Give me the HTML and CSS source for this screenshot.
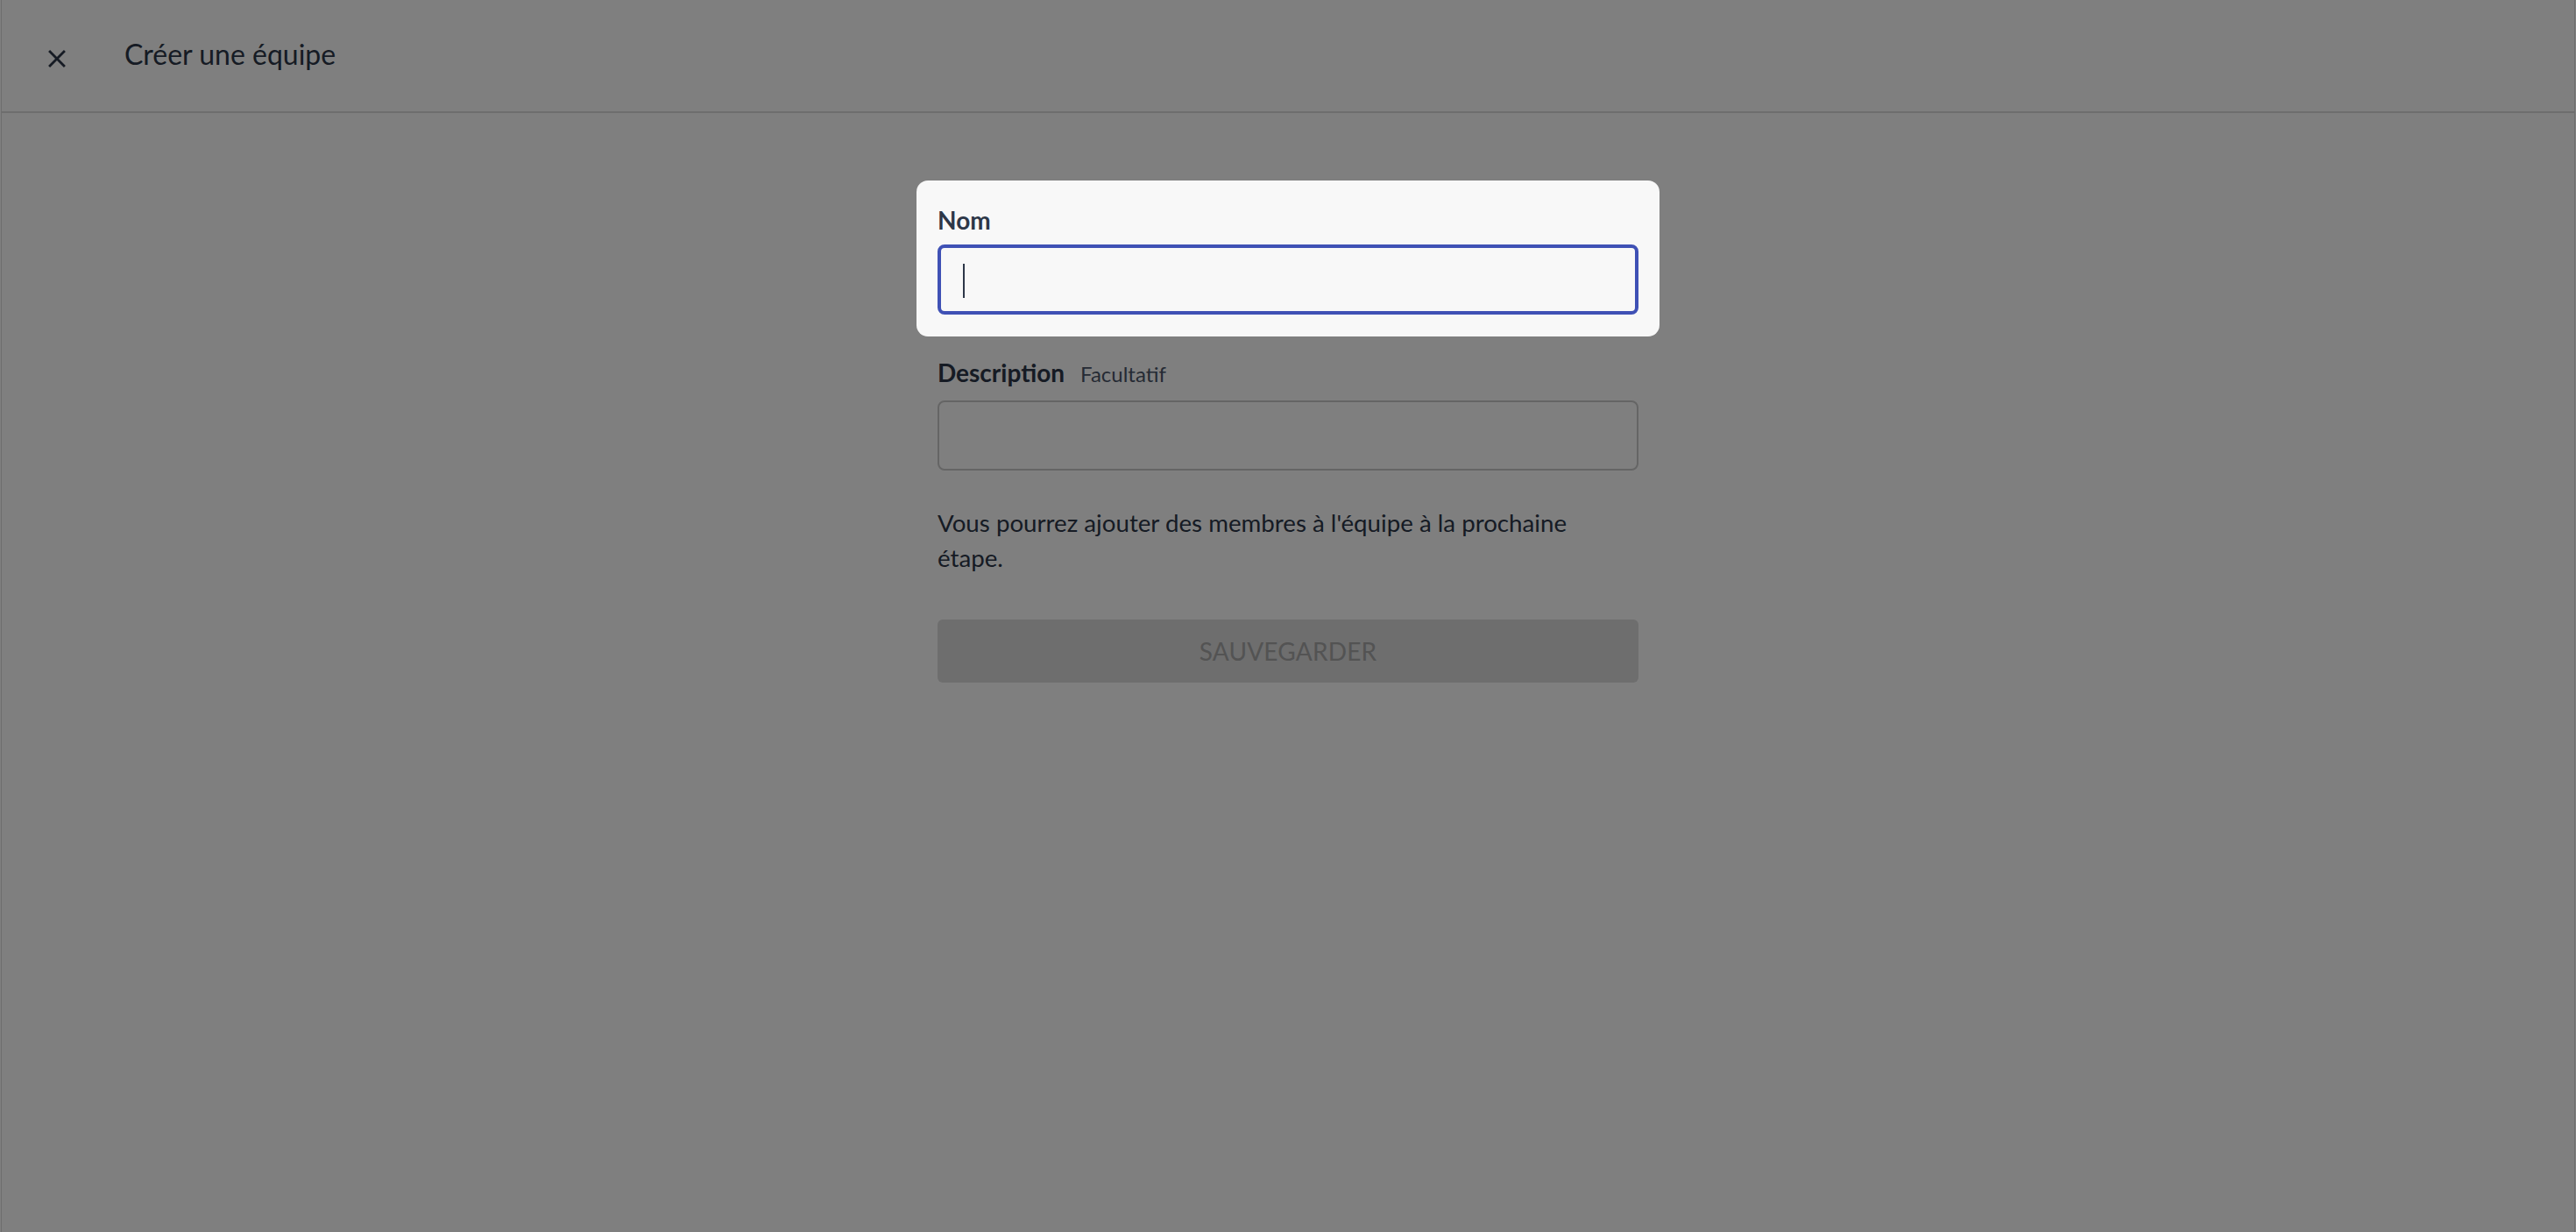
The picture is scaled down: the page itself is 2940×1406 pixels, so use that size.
FILE: index.html
```html
<!DOCTYPE html>
<html lang="fr">
<head>
  <meta charset="UTF-8" />
  <meta name="viewport" content="width=device-width, initial-scale=1.0"/>
  <title>Créer une équipe</title>
  <link rel="stylesheet" href="styles.css">
</head>
<body>
  <div class="page">
    <header class="topbar">
      <button class="close-btn" type="button" aria-label="Fermer">
        <svg viewBox="0 0 24 24" width="34" height="34">
          <path d="M19 6.41L17.59 5 12 10.59 6.41 5 5 6.41 10.59 12 5 17.59 6.41 19 12 13.41 17.59 19 19 17.59 13.41 12z"/>
        </svg>
      </button>
      <h1>Créer une équipe</h1>
    </header>

    <form class="team-form" onsubmit="return false">
      <!-- champ mis en avant par le guide -->
      <div class="field spotlight">
        <label for="nom">Nom</label>
        <div class="input-wrap">
          <input type="text" id="nom" class="focused">
          <span class="caret"></span>
        </div>
      </div>

      <div class="field field-optional">
        <label for="description">Description<span class="optional">Facultatif</span></label>
        <input type="text" id="description">
      </div>

      <p class="hint">Vous pourrez ajouter des membres à l'équipe à la prochaine étape.</p>

      <button class="save-btn" type="submit" disabled>Sauvegarder</button>
    </form>
  </div>
</body>
</html>
```

FILE: styles.css
```css
body {
  margin: 0;
  font-family: Lato, "Noto Sans", sans-serif;
  color: #2d3748;
  background: #fff;
}
.page {
  min-height: 100vh;
  margin: 0 1px;
  border-left: 1px solid #dcdcdc;
  border-right: 1px solid #dcdcdc;
  box-sizing: border-box;
}
.topbar {
  height: 127px;
  border-bottom: 2px solid #dcdcdc;
  display: flex;
  align-items: center;
  padding-left: 46px;
}
.close-btn {
  width: 34px;
  height: 34px;
  margin-top: 6px;
  padding: 0;
  border: none;
  background: none;
  color: #2d3748;
  cursor: pointer;
}
.close-btn svg {
  display: block;
  fill: currentColor;
}
.topbar h1 {
  margin: 0 0 4px 60px;
  font-size: 32px;
  font-weight: 400;
  line-height: 38px;
}
.team-form {
  width: 800px;
  margin: 77px auto 0;
}
.spotlight {
  position: relative;
  z-index: 2;
  margin: 0 -24px;
  padding: 25px 24px;
  background: #f8f8f8;
  border-radius: 13px;
  box-shadow: 0 0 0 3000px rgba(0,0,0,0.5);
}
label {
  display: block;
  font-size: 28px;
  font-weight: 700;
  line-height: 40px;
  margin-bottom: 8px;
}
.optional {
  margin-left: 18px;
  font-size: 24px;
  font-weight: 400;
  line-height: 1;
  color: #4a5568;
}
.field-optional {
  margin-top: 21px;
}
.field-optional label {
  margin-bottom: 12px;
}
input {
  display: block;
  width: 100%;
  height: 80px;
  box-sizing: border-box;
  padding: 0 24px;
  border: 2px solid #cbcbcb;
  border-radius: 8px;
  background: transparent;
  font-family: inherit;
  font-size: 28px;
  color: inherit;
  outline: none;
}
input.focused {
  border: 4px solid #3f51b5;
}
.input-wrap {
  position: relative;
}
.caret {
  position: absolute;
  left: 29px;
  top: 22px;
  width: 2px;
  height: 39px;
  background: #2d3748;
}
.hint {
  margin: 40px 0 0;
  max-width: 780px;
  font-size: 27.7px;
  line-height: 40px;
}
.save-btn {
  display: block;
  width: 100%;
  height: 72px;
  margin-top: 50px;
  padding: 0;
  border: none;
  border-radius: 6px;
  background: #dcdcdc;
  color: #a6a6a6;
  font-family: inherit;
  font-size: 28px;
  letter-spacing: 0.2px;
  text-transform: uppercase;
}
```
